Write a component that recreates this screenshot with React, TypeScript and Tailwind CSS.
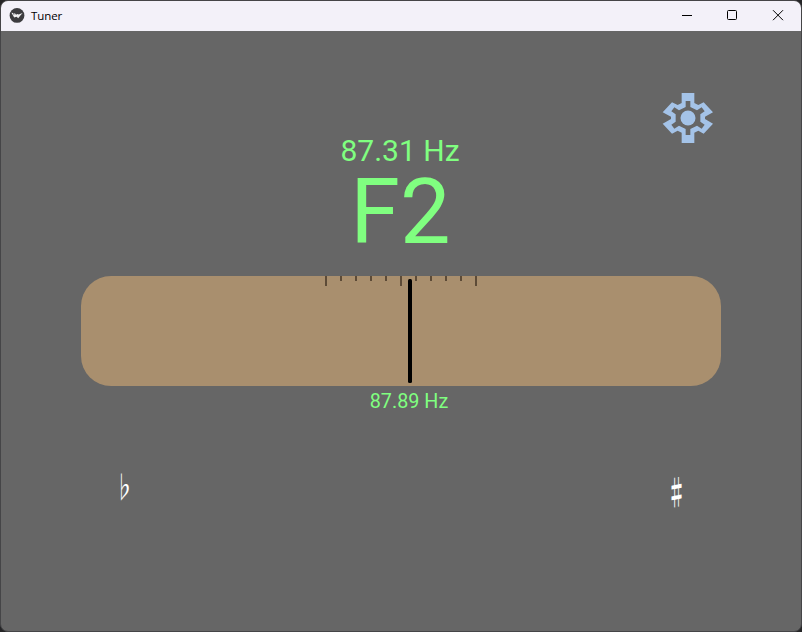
function TitleBar() {
  return (
    <header className="flex h-[30px] shrink-0 items-center bg-[#f3f1f9] text-black">
      <svg className="ml-2 size-4" viewBox="0 0 16 16">
        <circle cx="8" cy="7.4" r="7.4" fill="#3c3c3f" />
        <path d="M2.4 4.8 4.2 5 5 7.4 5.6 4.8 7 6.8 8.4 6 9.6 6.6 13.6 5 11.4 7.6 9.2 10.2 7.6 8.8 5.2 9.6Z" fill="#f1f1f3" />
      </svg>
      <span className="ml-[6px] font-['Open_Sans',sans-serif] text-[11.5px] leading-4 tracking-[-0.1px]">Tuner</span>
      <svg className="ml-auto mr-[15px] mb-[2px] h-[14px] w-[106px]" viewBox="0 0 106 14" fill="none" stroke="#000">
        <path d="M2 7.5H12" />
        <rect x="47.5" y="2.5" width="9" height="9" rx="1" />
        <path d="M93 2.2 103 12.2M103 2.2 93 12.2" />
      </svg>
    </header>
  );
}

function Gear() {
  return (
    <svg className="size-[66px]" viewBox="0 0 198 198" fill="#a4c3e8">
      <path
        fillRule="evenodd"
        d="M80 24H118V54L130 60L146 52L174 82L150 95V102L174 116L146 146L130 137L118 143V174H80V143L68 137L51 146L23 116L48 102V95L23 82L51 52L68 60L80 54ZM92 48V66L72 76L58 67L49 79L62 88V110L49 119L58 131L72 122L92 132V150H106V132L126 122L140 131L149 119L136 110V88L149 79L140 67L126 76L106 66V48Z"
      />
      <circle cx="99" cy="99" r="22.5" />
    </svg>
  );
}

const ticks = [0, 1, 2, 3, 4, 5, 6, 7, 8, 9, 10];

function Gauge() {
  return (
    <div className="mx-20 h-[110px] rounded-[30px] bg-[#a98f6e]">
      <svg className="h-full w-full" viewBox="0 0 640 110">
        {ticks.map((i) => (
          <rect key={i} x={244 + i * 15} y="0" width="2" height={i % 5 === 0 ? 10 : 5} fill="#5d4b37" />
        ))}
        <rect x="327" y="3" width="4" height="104" rx="1.5" fill="#000" />
      </svg>
    </div>
  );
}

export default function App() {
  return (
    <div className="h-[632px] w-[802px] bg-[#252527]">
      <div className="flex h-full flex-col overflow-hidden rounded-lg border border-[#454547] bg-[#666666] font-[Roboto,sans-serif] text-[#80ff80]">
        <TitleBar />
        <main className="flex flex-1 flex-col">
          <div className="mt-[54px] mr-20 flex h-[48px] justify-end">
            <Gear />
          </div>
          <div className="mr-[2px] flex h-9 items-center justify-center text-[30px] leading-9">87.31 Hz</div>
          <div className="mr-px flex h-[107px] items-start justify-center pt-[3px] text-[90px] leading-[82px]">F2</div>
          <Gauge />
          <div className="ml-4 flex h-[30px] items-center justify-center pt-[2px] text-[19.8px]">87.89 Hz</div>
          <div className="mt-[47px] flex justify-between font-['Noto_Sans_CJK_JP',sans-serif] leading-[44px] text-white">
            <span className="ml-[107px] w-8 scale-x-[0.65] text-center text-[30px]">♭</span>
            <span className="mt-[6px] mr-[109px] w-8 scale-x-[0.58] skew-y-[2deg] text-center text-[34px] font-bold">♯</span>
          </div>
        </main>
      </div>
    </div>
  );
}
